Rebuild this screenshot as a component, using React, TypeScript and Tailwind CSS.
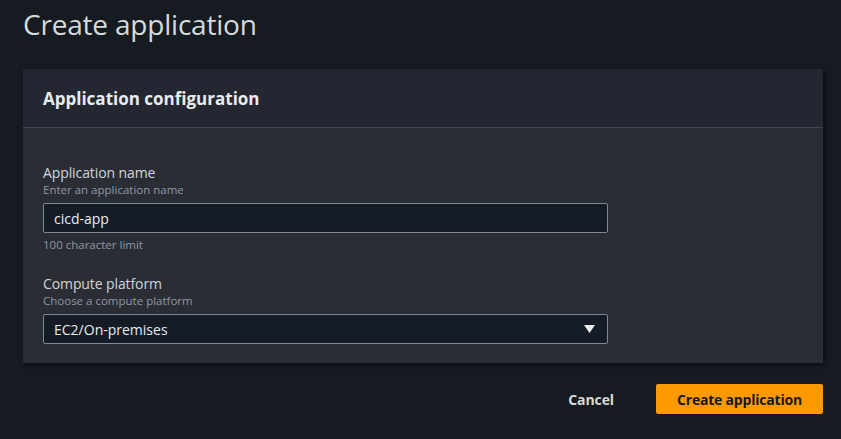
import React from "react";

export default function App() {
  return (
    <div
      className="w-[841px] h-[439px] bg-[#161a21] overflow-hidden"
      style={{ fontFamily: '"Open Sans", "Noto Sans", sans-serif' }}
    >
      <div className="pl-[23px] pr-[18px]">
        <h1 className="text-[28px] leading-[34px] pt-[7px] text-[#d5dbdb] font-normal tracking-[-0.2px]">
          Create application
        </h1>
        <div className="mt-[28px] w-[800px] shadow-[2px_2px_4px_rgba(0,0,0,0.5)]">
          <div className="h-[59px] bg-[#222731] border-b border-[#414750] flex items-center px-[20px]">
            <h2 className="text-[17px] font-bold text-[#e9ebed] pt-[1px]">
              Application configuration
            </h2>
          </div>
          <div className="bg-[#2a2d33] px-[20px] pt-[36px] pb-[19px]">
            <div className="text-[14px] leading-[18px] text-[#d1d5db] tracking-[-0.1px]">Application name</div>
            <div className="text-[11.5px] leading-[15px] text-[#8d99a8]">Enter an application name</div>
            <div className="mt-[6px] w-[565px] h-[30px] border border-[#7d8998] rounded-[2px] bg-[#161c26] flex items-center px-[10px] text-[14px] text-[#e9ebed]">
              cicd-app
            </div>
            <div className="mt-[4px] text-[11.5px] leading-[15px] text-[#8d99a8]">100 character limit</div>
            <div className="mt-[23px] text-[14px] leading-[18px] text-[#d1d5db] tracking-[-0.1px]">Compute platform</div>
            <div className="text-[11.5px] leading-[15px] text-[#8d99a8]">Choose a compute platform</div>
            <div className="mt-[6px] w-[565px] h-[30px] border border-[#7d8998] rounded-[2px] bg-[#161c26] flex items-center justify-between pl-[10px] pr-[12px] text-[14px] text-[#e9ebed]">
              <span>EC2/On-premises</span>
              <svg width="11" height="8" viewBox="0 0 11 8">
                <path d="M0 0 H11 L5.5 8 Z" fill="#e9ebed" />
              </svg>
            </div>
          </div>
        </div>
        <div className="mt-[21px] w-[800px] flex justify-end items-center">
          <button className="text-[14px] font-bold text-[#d5dbdb] mr-[42px] tracking-[-0.1px]">Cancel</button>
          <button className="h-[30px] w-[167px] bg-[#ff9900] rounded-[2px] text-[14px] font-bold text-[#16191f] tracking-[-0.2px]">
            Create application
          </button>
        </div>
      </div>
    </div>
  );
}
